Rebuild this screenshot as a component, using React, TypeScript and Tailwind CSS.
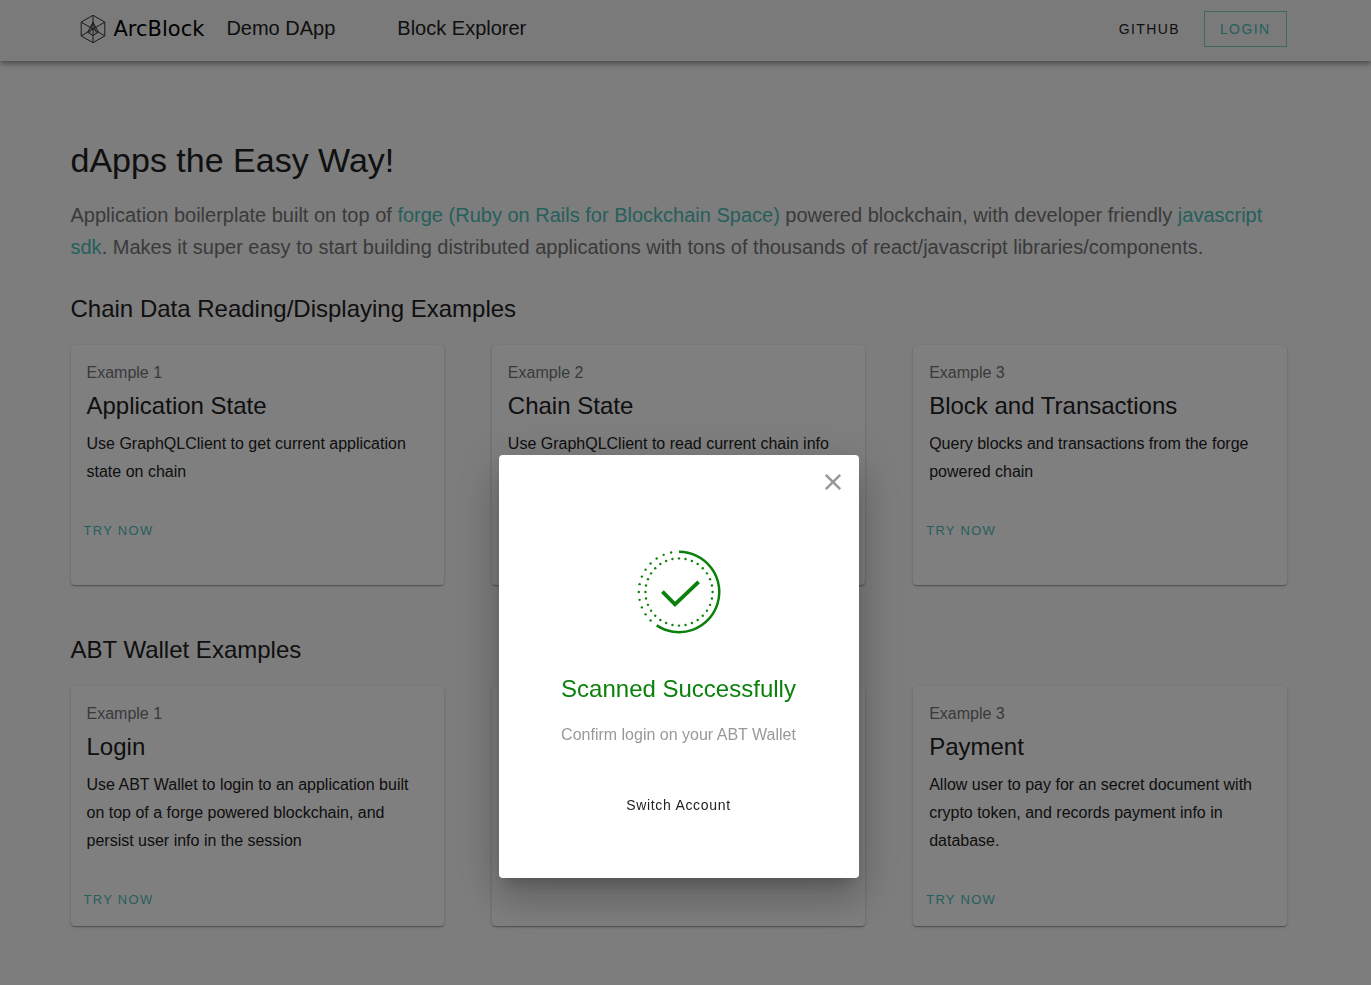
import React from "react";

type Example = { label: string; title: string; text: string; action: boolean };

const chainExamples: (Example | null)[] = [
  {
    label: "Example 1",
    title: "Application State",
    text: "Use GraphQLClient to get current application state on chain",
    action: true,
  },
  {
    label: "Example 2",
    title: "Chain State",
    text: "Use GraphQLClient to read current chain info",
    action: false,
  },
  {
    label: "Example 3",
    title: "Block and Transactions",
    text: "Query blocks and transactions from the forge powered chain",
    action: true,
  },
];

const walletExamples: (Example | null)[] = [
  {
    label: "Example 1",
    title: "Login",
    text: "Use ABT Wallet to login to an application built on top of a forge powered blockchain, and persist user info in the session",
    action: true,
  },
  null,
  {
    label: "Example 3",
    title: "Payment",
    text: "Allow user to pay for an secret document with crypto token, and records payment info in database.",
    action: true,
  },
];

function LogoMark() {
  return (
    <svg width="26" height="30" viewBox="0 0 26 30" fill="none" stroke="#333" strokeWidth="1" aria-hidden="true">
      <path d="M13 1.3 24.8 8.1v13.8L13 28.7 1.2 21.9V8.1z" />
      <path d="M13 1.3v27.4M1.2 8.1 24.8 21.9M24.8 8.1 1.2 21.9" />
      <path d="M13 8.3 7.6 18.2 13 21.5l5.4-3.3z" />
      <path d="M13 8.3 9.6 19.4M13 8.3l3.4 11.1" strokeWidth="0.8" />
    </svg>
  );
}

function dots(radius: number, from: number, count: number) {
  return Array.from({ length: count }, (_, i) => {
    const angle = ((from + i) * Math.PI) / 16;
    return (
      <circle
        key={`${radius}-${i}`}
        cx={42 + radius * Math.sin(angle)}
        cy={42 - radius * Math.cos(angle)}
        r="1.2"
        fill="#0b810b"
      />
    );
  });
}

function SuccessIcon() {
  return (
    <svg width="84" height="84" viewBox="0 0 84 84" fill="none" stroke="#0b810b" aria-hidden="true">
      <path d="M42 1.8A40.2 40.2 0 1 1 19.7 75.4" strokeWidth="2.5" />
      <path d="M25.4 41.6 38 54.4 61.6 31.8" strokeWidth="3.8" />
      <g stroke="none">
        {dots(33.6, 0, 32)}
        {dots(40.2, 20, 12)}
      </g>
    </svg>
  );
}

function Card({ example }: { example: Example | null }) {
  return (
    <article className="min-h-60 rounded bg-white px-4 pb-2 pt-4 shadow-[0_1px_3px_rgba(0,0,0,0.2),0_1px_1px_rgba(0,0,0,0.14),0_2px_1px_-1px_rgba(0,0,0,0.12)]">
      {example && (
        <>
          <p className="text-base leading-6 text-[#757575]">{example.label}</p>
          <h3 className="mt-[5px] text-2xl leading-8">{example.title}</h3>
          <p className="mt-2 text-base leading-7">{example.text}</p>
          {example.action && (
            <button type="button" className="-ml-[11px] mt-[27px] h-9 px-2 text-[13px] tracking-widest text-[#4dc0b9]">
              TRY NOW
            </button>
          )}
        </>
      )}
    </article>
  );
}

function Section({ title, examples }: { title: string; examples: (Example | null)[] }) {
  return (
    <section>
      <h2 className="mb-5 text-2xl leading-8">{title}</h2>
      <div className="grid grid-cols-3 gap-12">
        {examples.map((example, i) => (
          <Card key={i} example={example} />
        ))}
      </div>
    </section>
  );
}

export default function App() {
  return (
    <div className="min-h-screen bg-[#fafafa] font-['Liberation_Sans',Arial,sans-serif] text-[#212121]">
      <header className="relative bg-[#f5f5f5] pr-[14px] shadow-[0_2px_4px_rgba(0,0,0,0.2),0_4px_5px_rgba(0,0,0,0.14),0_1px_10px_rgba(0,0,0,0.12)]">
        <div className="mx-auto flex h-[61px] max-w-[1216px] items-center pb-1 pl-[9px]">
          <a href="#home" className="flex items-center gap-2 pr-[22px] text-black">
            <LogoMark />
            <span className="font-['DejaVu_Sans',sans-serif] text-[21px] leading-7">ArcBlock</span>
          </a>
          <nav className="flex flex-1 items-center pb-[2px] text-xl leading-8">
            <a href="#demo">Demo DApp</a>
            <a href="#explorer" className="ml-[62px]">Block Explorer</a>
          </nav>
          <a href="#github" className="mr-6 text-sm tracking-widest">GITHUB</a>
          <button type="button" className="h-9 border border-[#4dc0b9]/70 px-[15px] text-sm tracking-widest text-[#4dc0b9]">
            LOGIN
          </button>
        </div>
      </header>

      <main className="pr-[14px] pt-[79px]">
        <div className="mx-auto flex max-w-[1216px] flex-col pb-14">
          <h1 className="text-[34px] leading-10">dApps the Easy Way!</h1>
          <p className="mb-[30px] mt-[19px] text-xl leading-8 text-[#757575]">
            Application boilerplate built on top of{" "}
            <a href="#forge" className="text-[#4dc0b9]">forge (Ruby on Rails for Blockchain Space)</a> powered
            blockchain, with developer friendly{" "}
            <a href="#sdk" className="text-[#4dc0b9]">javascript sdk</a>. Makes it super easy to start building
            distributed applications with tons of thousands of react/javascript libraries/components.
          </p>
          <div className="flex flex-col gap-[49px]">
            <Section title="Chain Data Reading/Displaying Examples" examples={chainExamples} />
            <Section title="ABT Wallet Examples" examples={walletExamples} />
          </div>
        </div>
      </main>

      <div className="fixed inset-0 flex items-center justify-center bg-black/50 pr-[14px] pt-[348px]">
        <div
          role="dialog"
          aria-labelledby="dialog-title"
          className="relative flex w-[360px] flex-col items-center rounded bg-white pb-[55px] pt-[95px] text-center shadow-[0_11px_15px_-7px_rgba(0,0,0,0.2),0_24px_38px_3px_rgba(0,0,0,0.14),0_9px_46px_8px_rgba(0,0,0,0.12)]"
        >
          <button type="button" aria-label="Close" className="absolute right-[15px] top-4 p-[2px]">
            <svg width="18" height="18" viewBox="0 0 18 18" stroke="#999" strokeWidth="2.6" aria-hidden="true">
              <path d="M1.8 1.8 16.2 16.2M16.2 1.8 1.8 16.2" />
            </svg>
          </button>
          <SuccessIcon />
          <h2 id="dialog-title" className="mt-[39px] text-2xl leading-8 text-[#0b810b]">Scanned Successfully</h2>
          <p className="mt-4 text-base leading-7 text-[#999]">Confirm login on your ABT Wallet</p>
          <button type="button" className="mt-[38px] h-9 px-4 text-sm tracking-wider">Switch Account</button>
        </div>
      </div>
    </div>
  );
}
